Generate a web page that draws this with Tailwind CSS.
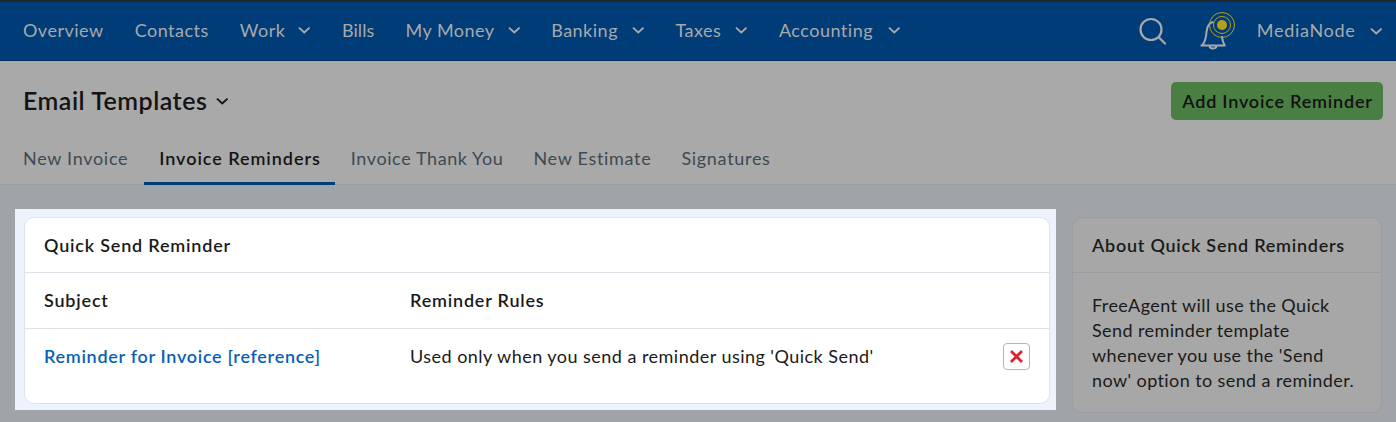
<!DOCTYPE html>
<html lang="en">
<head>
  <meta charset="UTF-8">
  <meta name="viewport" content="width=device-width, initial-scale=1.0">
  <title>Email Templates</title>
  <script src="https://cdn.jsdelivr.net/npm/@tailwindcss/browser@4"></script>
</head>
<body class="h-[422px] overflow-hidden bg-[#a0a3a8] font-['Lato',sans-serif] text-[18px] text-[#1a1a1a]">
  <!-- top nav -->
  <nav class="flex h-[61px] items-center justify-between border-t-2 border-b border-t-[#23272c] border-b-[#00315f] bg-[#003c78] pl-[23px] pr-[14px] text-[#a9a9a9]">
    <div class="-mt-[2px] flex items-center gap-[31px] tracking-[0.5px]">
      <a>Overview</a>
      <a>Contacts</a>
      <a class="flex items-center gap-[13px]">Work
        <svg class="h-[8px] w-[12.5px]" viewBox="0 0 13 8" fill="none" stroke="currentColor" stroke-width="2"><path d="M1 1.500l5.500 5 5.500-5"/></svg>
      </a>
      <a class="tracking-[0.1px]">Bills</a>
      <a class="flex items-center gap-[13px]">My Money
        <svg class="h-[8px] w-[12.5px]" viewBox="0 0 13 8" fill="none" stroke="currentColor" stroke-width="2"><path d="M1 1.500l5.500 5 5.500-5"/></svg>
      </a>
      <a class="flex items-center gap-[14px]">Banking
        <svg class="h-[8px] w-[12.5px]" viewBox="0 0 13 8" fill="none" stroke="currentColor" stroke-width="2"><path d="M1 1.500l5.500 5 5.500-5"/></svg>
      </a>
      <a class="flex items-center gap-[14px]">Taxes
        <svg class="h-[8px] w-[12.5px]" viewBox="0 0 13 8" fill="none" stroke="currentColor" stroke-width="2"><path d="M1 1.500l5.500 5 5.500-5"/></svg>
      </a>
      <a class="flex items-center gap-[15px]">Accounting
        <svg class="h-[8px] w-[12.5px]" viewBox="0 0 13 8" fill="none" stroke="currentColor" stroke-width="2"><path d="M1 1.500l5.500 5 5.500-5"/></svg>
      </a>
    </div>
    <div class="flex items-center">
      <svg class="mr-[32px] h-[28px] w-[28px]" viewBox="0 0 28 28" fill="none" stroke="currentColor" stroke-width="2.200" stroke-linecap="round"><circle cx="12" cy="12.500" r="10.500"/><path d="M20 20.500l6 6"/></svg>
      <svg class="mr-[22px] h-[38px] w-[36px]" viewBox="0 0 36 38" fill="none" stroke="currentColor" stroke-width="2"><path d="M1.500 33.500h25M3.500 33c2.500-3 3.500-6 4-13 .5-6 3-9.500 7-10M23 24c.2 4 1.200 7 2.500 9M10.500 34.500c.8 2.800 6 2.800 7 0"/><circle cx="23" cy="13" r="5" fill="#b5a019" stroke="none"/><circle cx="23" cy="13" r="8.500" stroke="#b5a019" stroke-width="1"/><circle cx="23" cy="13" r="12.500" stroke="#b5a019" stroke-width="1"/></svg>
      <span class="mr-[14px] -mt-[2px] tracking-[0.7px]">MediaNode</span>
      <svg class="h-[8px] w-[12.5px]" viewBox="0 0 13 8" fill="none" stroke="currentColor" stroke-width="2"><path d="M1 1.500l5.500 5 5.500-5"/></svg>
    </div>
  </nav>

  <!-- page header -->
  <header class="h-[124px] border-b border-[#999ca1] bg-[#a9a9a9] pl-[23px] pr-[13px]">
    <div class="flex h-[77px] items-center justify-between pt-[3px]">
      <h1 class="flex items-center gap-[9px] text-[25px] font-semibold tracking-[0.5px] text-[#141414]">Email Templates
        <svg class="h-[8px] w-[12.5px]" viewBox="0 0 13 8" fill="none" stroke="currentColor" stroke-width="2"><path d="M1 1.500l5.500 5 5.500-5"/></svg>
      </h1>
      <button class="h-[38px] w-[212px] rounded-[5px] bg-[#4a7f43] pl-[1px] text-center font-semibold tracking-[0.8px] text-[#111]">Add Invoice Reminder</button>
    </div>
    <div class="-ml-[15px] flex h-[47px] items-stretch tracking-[0.7px] text-[#3e4a54]">
      <a class="flex items-center pb-[7px] pl-[15px] pr-[16px]">New Invoice</a>
      <a class="flex items-center border-b-[3px] border-[#003c78] pb-[4px] pl-[15px] pr-[14px] font-semibold tracking-[0.95px] text-[#141414]">Invoice Reminders</a>
      <a class="flex items-center pb-[7px] pl-[16px] pr-[15px] tracking-[0.6px]">Invoice Thank You</a>
      <a class="flex items-center px-[15px] pb-[7px]">New Estimate</a>
      <a class="flex items-center px-[15px] pb-[7px]">Signatures</a>
    </div>
  </header>

  <main class="flex items-start pl-[15px] pt-[24px]">
    <!-- highlighted card -->
    <div class="w-[1041px] bg-[#edf3fc] pb-[6px] pl-[9px] pr-[6px] pt-[8px]">
      <section class="h-[187px] rounded-[10px] border border-[#e0e3ea] bg-white">
        <h2 class="flex h-[55px] items-center border-b border-[#e0e3ea] pl-[19px] font-semibold tracking-[0.8px]">Quick Send Reminder</h2>
        <div class="flex h-[56px] items-center border-b border-[#e0e3ea] pl-[19px] font-semibold tracking-[0.8px]">
          <span class="w-[366px]">Subject</span>
          <span>Reminder Rules</span>
        </div>
        <div class="flex h-[55px] items-center pl-[19px] pr-[19px] tracking-[0.47px]">
          <a class="w-[366px] font-semibold tracking-[0.7px] text-[#0a5fb4]">Reminder for Invoice [reference]</a>
          <span>Used only when you send a reminder using 'Quick Send'</span>
          <button class="ml-auto flex h-[27px] w-[27px] items-center justify-center rounded-[4px] border border-[#b5b5b8] bg-white">
            <svg class="h-[13px] w-[13px]" viewBox="0 0 13 13" fill="none" stroke="#e0202a" stroke-width="2.800"><path d="M1 1l11 11M12 1L1 12"/></svg>
          </button>
        </div>
      </section>
    </div>

    <!-- side card -->
    <aside class="ml-[16px] mt-[8px] h-[196px] w-[310px] rounded-[10px] border border-[#999ca1] bg-[#a7a7a7]">
      <h2 class="flex h-[55px] items-center border-b border-[#999ca1] pl-[19px] font-semibold tracking-[0.75px]">About Quick Send Reminders</h2>
      <p class="pl-[19px] pr-[16px] pt-[20px] leading-[25px] tracking-[0.4px]">FreeAgent will use the Quick Send reminder template whenever you use the 'Send now' option to send a reminder.</p>
    </aside>
  </main>
</body>
</html>
